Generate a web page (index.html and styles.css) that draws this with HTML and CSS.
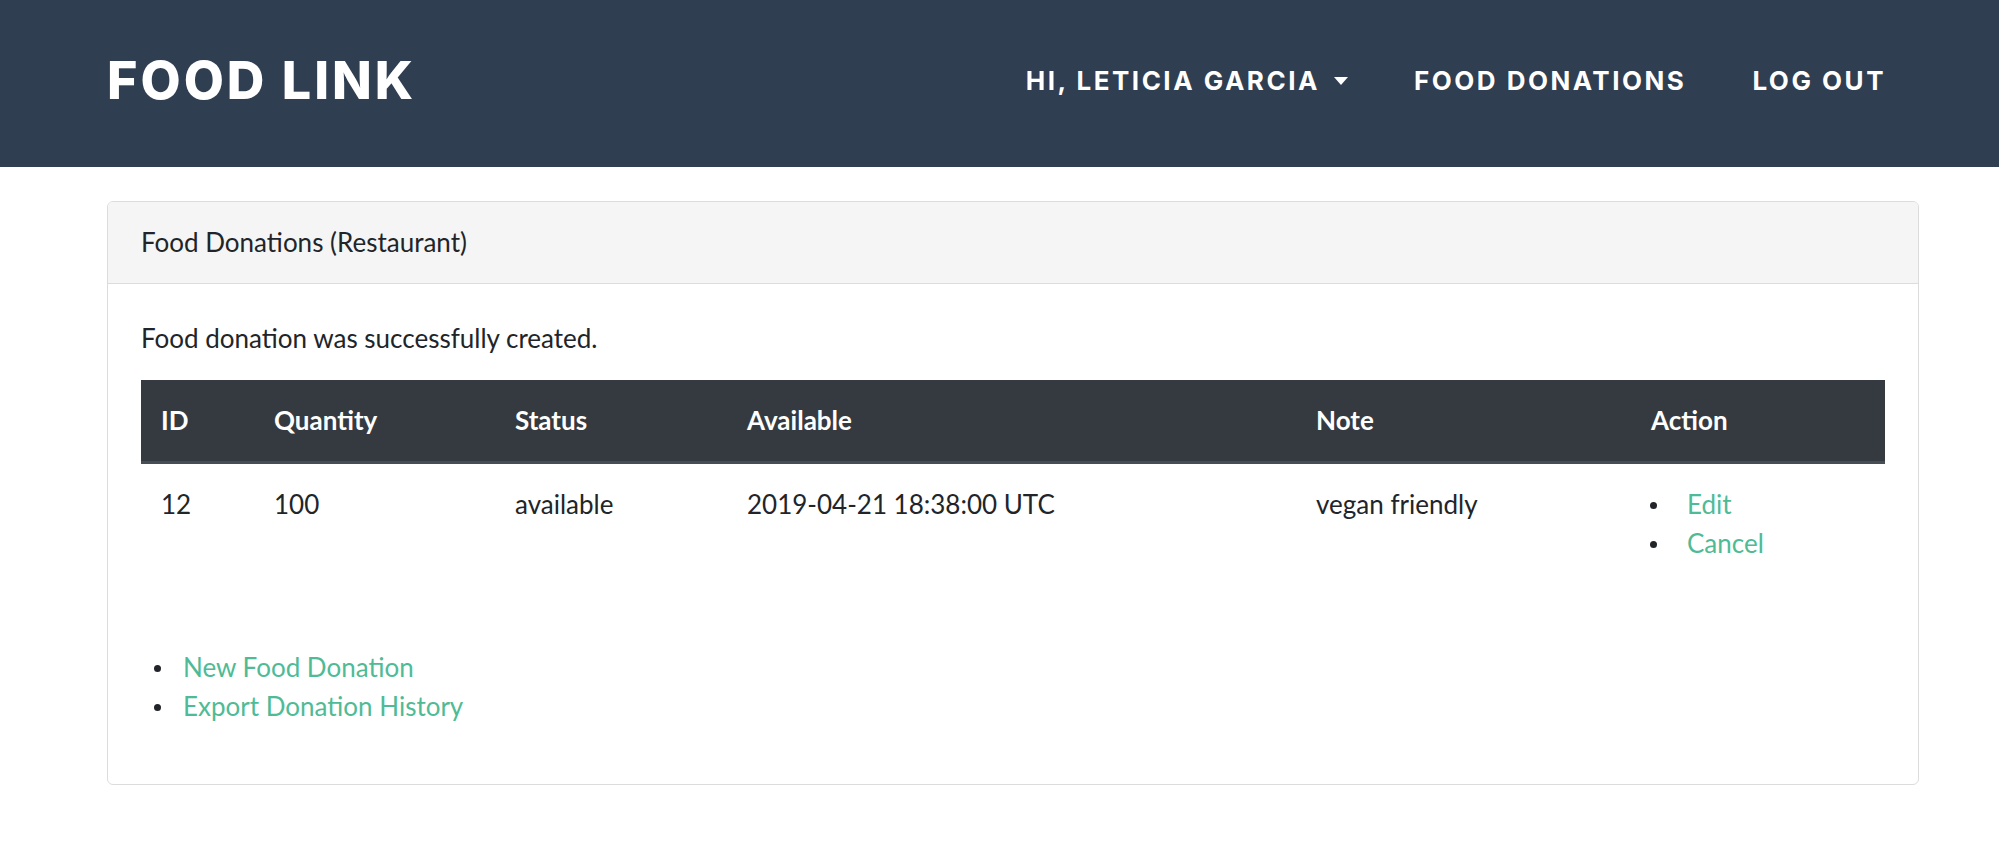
FILE: index.html
```html
<!DOCTYPE html>
<html lang="en">
<head>
<meta charset="utf-8">
<title>Food Link</title>
<link rel="stylesheet" href="styles.css">
</head>
<body>
<header class="navbar">
  <a class="brand" href="#">FOOD LINK</a>
  <nav class="nav">
    <a class="nav-link dropdown" href="#">HI, LETICIA GARCIA <span class="caret"></span></a>
    <a class="nav-link" href="#">FOOD DONATIONS</a>
    <a class="nav-link" href="#">LOG OUT</a>
  </nav>
</header>
<main class="main">
  <section class="card">
    <div class="card-header">Food Donations (Restaurant)</div>
    <div class="card-body">
      <p class="notice">Food donation was successfully created.</p>
      <table class="table">
        <thead>
          <tr>
            <th class="c-id">ID</th>
            <th class="c-qty">Quantity</th>
            <th class="c-status">Status</th>
            <th class="c-avail">Available</th>
            <th class="c-note">Note</th>
            <th class="c-action">Action</th>
          </tr>
        </thead>
        <tbody>
          <tr>
            <td>12</td>
            <td>100</td>
            <td>available</td>
            <td>2019-04-21 18:38:00 UTC</td>
            <td>vegan friendly</td>
            <td>
              <ul class="bullets actions">
                <li><a href="#">Edit</a></li>
                <li><a href="#">Cancel</a></li>
              </ul>
            </td>
          </tr>
        </tbody>
      </table>
      <ul class="bullets links">
        <li><a href="#">New Food Donation</a></li>
        <li><a href="#">Export Donation History</a></li>
      </ul>
    </div>
  </section>
</main>
</body>
</html>
```
FILE: styles.css
```css
* { box-sizing: border-box; }
html, body { margin: 0; padding: 0; }
body {
  font-family: Lato, "Open Sans", sans-serif;
  font-size: 26px;
  line-height: 1.5;
  color: #212529;
  background: #fff;
}
a { text-decoration: none; }

.navbar {
  height: 167px;
  background: #2f3e50;
  display: flex;
  align-items: center;
  justify-content: space-between;
  padding: 0 80px 6px 107px;
}
.brand {
  font-family: Inter, "Noto Sans", sans-serif;
  font-weight: 800;
  font-size: 52px;
  letter-spacing: 3px;
  color: #fff;
  line-height: 1;
}
.nav {
  display: flex;
  align-items: center;
}
.nav-link {
  font-family: Inter, "Noto Sans", sans-serif;
  font-weight: 700;
  font-size: 26px;
  letter-spacing: 2.5px;
  color: #fff;
  padding: 0 33px;
  display: flex;
  align-items: center;
  line-height: 1;
}
.caret {
  display: inline-block;
  width: 0;
  height: 0;
  margin-left: 14px;
  border-left: 7px solid transparent;
  border-right: 7px solid transparent;
  border-top: 8px solid #fff;
}

.main {
  padding: 34px 80px 40px 107px;
}
.card {
  border: 1px solid #dcdcdc;
  border-radius: 6px;
  overflow: hidden;
}
.card-header {
  background: #f5f5f5;
  border-bottom: 1px solid #dcdcdc;
  padding: 21px 33px;
}
.card-body {
  padding: 35px 33px 32px;
}
.notice {
  margin: 0 0 22px;
}
.table {
  width: 100%;
  border-collapse: collapse;
  margin-bottom: 38px;
}
.table th, .table td {
  text-align: left;
  vertical-align: top;
  padding: 21px 20px;
}
.table thead th {
  background: #343a40;
  color: #fff;
  font-weight: 700;
  border-bottom: 3px solid #454d55;
}
.c-id { width: 113px; }
.c-qty { width: 241px; }
.c-status { width: 232px; }
.c-avail { width: 569px; }
.c-note { width: 335px; }

.bullets {
  list-style: none;
  margin: 0 0 26px;
}
.bullets li {
  position: relative;
}
.bullets li::before {
  content: "";
  position: absolute;
  top: 17px;
  width: 7px;
  height: 7px;
  border-radius: 50%;
  background: #212529;
}
.actions {
  padding-left: 36px;
}
.actions li::before {
  left: -37px;
}
.links {
  padding-left: 42px;
}
.links li::before {
  left: -29px;
}
.bullets a {
  color: #4fbb96;
}
```
